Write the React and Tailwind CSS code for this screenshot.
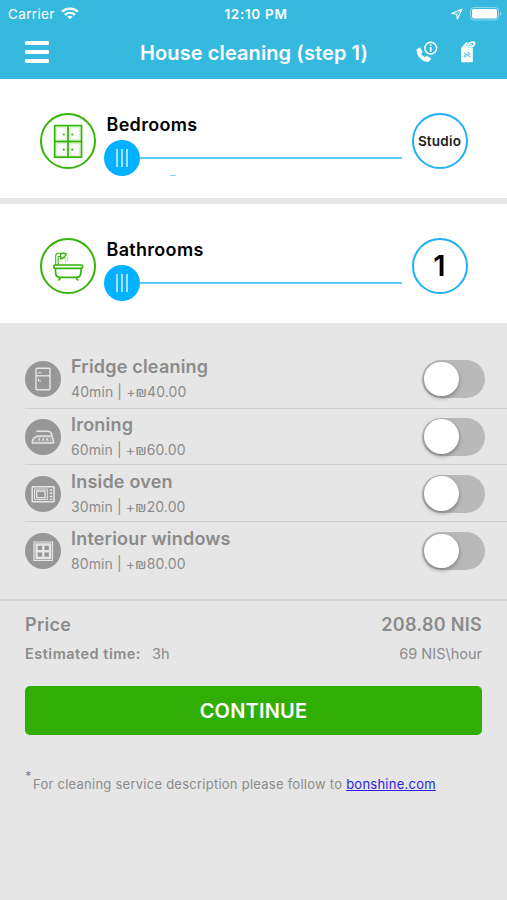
import { useState } from 'react'

const extras = [
  { id: 'fridge', name: 'Fridge cleaning', minutes: 40, price: '40.00', Icon: FridgeIcon, row: 'h-[58px] border-b pb-px' },
  { id: 'ironing', name: 'Ironing', minutes: 60, price: '60.00', Icon: IronIcon, row: 'h-[56px] border-b' },
  { id: 'oven', name: 'Inside oven', minutes: 30, price: '20.00', Icon: OvenIcon, row: 'h-[57px] border-b pt-px' },
  { id: 'windows', name: 'Interiour windows', minutes: 80, price: '80.00', Icon: WindowIcon, row: 'h-[58px]' },
]

function WifiIcon() {
  return (
    <svg width="18" height="13" viewBox="0 0 18 13" fill="none" stroke="white" strokeWidth="2.3">
      <path d="M1 4.700C5.500.5 12.500.5 17 4.700" />
      <path d="M4 7.800c2.900-2.700 7.100-2.700 10 0" />
      <path d="M9 12.300 6.300 9.600c1.500-1.300 3.900-1.300 5.400 0z" fill="white" stroke="none" />
    </svg>
  )
}

function LocationIcon() {
  return (
    <svg width="12" height="12" viewBox="0 0 12 12" fill="none" stroke="white" strokeWidth="1.100" strokeLinejoin="round">
      <path d="M11 1 .8 5.500l4.800.7.700 4.800z" />
      <path d="M11 1 5.600 6.200" strokeWidth=".6" />
    </svg>
  )
}

function BatteryIcon() {
  return (
    <svg width="32" height="14" viewBox="0 0 32 14" fill="none">
      <rect x=".5" y=".5" width="28" height="12.500" rx="3.500" stroke="white" strokeOpacity=".45" />
      <rect x="2" y="2" width="25" height="9.500" rx="2" fill="white" />
      <path d="M30 4.700c1.600.6 1.600 3.500 0 4.100z" fill="white" fillOpacity=".6" />
    </svg>
  )
}

function PhoneInfoIcon() {
  return (
    <svg width="22" height="22" viewBox="0 0 22 22" fill="none">
      <path
        d="M1 8.200 2.900 6.700c.5-.4 1.100-.2 1.400.3l2 3.300c.3.500.2 1-.3 1.400l-.9.900c.9 1.700 2.100 2.900 3.900 3.700l1-1c.4-.4 1-.4 1.500-.1l3 1.900c.5.3.6.9.2 1.400l-1.500 1.800c-.4.500-1 .7-1.700.6C5.900 20.300 1.400 16 .4 9.600c-.1-.6.1-1.100.6-1.400z"
        fill="white"
      />
      <circle cx="14.700" cy="7.100" r="5.900" stroke="white" strokeWidth="1.500" />
      <path d="M14.700 6v4.700M14.700 3.400v1.500" stroke="white" strokeWidth="1.700" />
    </svg>
  )
}

function PriceTagIcon() {
  return (
    <svg width="16" height="22" viewBox="0 0 16 22" fill="none">
      <path d="M1 7.200 5 2.500C5.700 1.700 6.200 1.500 7 1.500h4.300L12.800 7v13c0 .8-.4 1.200-1.200 1.200H2.200C1.400 21.200 1 20.800 1 20z" fill="white" />
      <path d="M7 5.500C8 2.500 11 .9 13.600 1.200c1.500.2 1.300 2.400-.3 3.500-1.800 1.300-3.300 1.300-5 1" stroke="#36b9df" strokeWidth="2.500" />
      <path d="M7 5.500C8 2.500 11 .9 13.600 1.200c1.500.2 1.300 2.400-.3 3.500-1.800 1.300-3.300 1.300-5 1" stroke="white" strokeWidth="1.700" />
      <path d="m3.700 11.800 6.500 4.200" stroke="#36b9df" strokeWidth="1" />
      <circle cx="8.800" cy="12.600" r="1" stroke="#36b9df" strokeWidth=".9" />
      <circle cx="5" cy="15.300" r="1" stroke="#36b9df" strokeWidth=".9" />
    </svg>
  )
}

function DrawersIcon() {
  return (
    <svg width="52" height="52" viewBox="2 2 52 52" fill="none" stroke="#36b509">
      <path d="M14.700 12.700h26.800v31.500H14.700zM28 12.700v31.500M14.700 28.500h26.800" strokeWidth="1.800" />
      <path d="M16.800 14.700h9.300v11.700h-9.300zM30 14.700h9.400v11.700H30zM16.800 30.500h9.300v11.700h-9.300zM30 30.500h9.400v11.700H30z" strokeWidth=".2" />
      <g fill="#36b509" stroke="none">
        <circle cx="23.800" cy="21.500" r="1.100" />
        <circle cx="32.300" cy="21.500" r="1.100" />
        <circle cx="23.800" cy="36.700" r="1.100" />
        <circle cx="32.300" cy="36.700" r="1.100" />
      </g>
    </svg>
  )
}

function BathtubIcon() {
  return (
    <svg width="52" height="52" viewBox="2 2 52 52" fill="none" stroke="#36b509" strokeWidth="1.700" strokeLinecap="round" strokeLinejoin="round">
      <rect x="13.700" y="27" width="29" height="3.300" rx="1.600" />
      <path d="M15.500 30.500v3.200c0 3.500 2 5.700 5.200 5.700h15.200c3.200 0 5.100-2.200 5.100-5.700v-3.200" />
      <path d="M20 39.500c0 1.400-.5 2.200-1.400 2.500M36.500 39.500c0 1.400.5 2.200 1.400 2.500" />
      <path d="M15.700 27V18.200c0-1.900 1-2.900 2.600-2.900h3M18.200 27v-8.500h2.500" strokeWidth="1.100" />
      <path d="M20.600 16v4.700c2.700-.3 4.700-2 5.500-4.900-2-.9-3.900-.9-5.500.2z" strokeWidth="1.500" />
      <path d="M25 20.500v.1M27.500 20v.1M25.500 22.800v.1M27.500 22.300v.1" strokeOpacity=".45" />
    </svg>
  )
}

function FridgeIcon() {
  return (
    <svg width="36" height="36" viewBox="0 0 36 36" fill="none" stroke="#e6e6e6" strokeWidth="1.400">
      <rect x="11" y="7.200" width="14" height="21.500" rx="1" />
      <path d="M11 14.800h14" />
      <path d="M13 11.700h3.500M13.500 17.500v2.500h2.500" strokeWidth="1" />
    </svg>
  )
}

function IronIcon() {
  return (
    <svg width="36" height="36" viewBox="0 0 36 36" fill="none" stroke="#e6e6e6" strokeWidth="1.500" strokeLinejoin="round">
      <path d="M11.500 12.300h11c2.300 0 3.700 1 4.200 3l2.100 8.700H7.200c.3-4.500 3-7 7-7h12.500" />
      <path d="M9.500 22c.4-2.300 2.300-3.300 5-3.300h10.800l.8 3.300z" strokeWidth=".4" />
      <path d="M13.300 20.500h1.800M17.300 20.500h1.800M21.300 20.500h1.800" strokeWidth="1.800" />
    </svg>
  )
}

function OvenIcon() {
  return (
    <svg width="36" height="36" viewBox="0 0 36 36" fill="none" stroke="#e6e6e6" strokeWidth="1.500">
      <rect x="7.200" y="10.800" width="21.800" height="15" rx=".5" />
      <path d="M9.500 13h12.800v10.600H9.500z" strokeWidth="1" />
      <path d="M11.700 15h8.400v6.600h-8.400z" strokeWidth="1.300" />
      <path d="M26 13.200v1.500M26 16.500V18M26 19.800v1.500M26 22.800v1.200" strokeWidth="2.500" />
    </svg>
  )
}

function WindowIcon() {
  return (
    <svg width="36" height="36" viewBox="0 0 36 36" fill="none" stroke="#e6e6e6">
      <path d="M9 9h18.500v18.500H9z" strokeWidth="1.200" />
      <path d="M11.500 11.500h13.500v13.500H11.500zM18.250 11.500v13.500M11.500 18.250h13.500" strokeWidth="2.300" />
    </svg>
  )
}

function SliderPanel({ label, value, valueClass, icon, children }) {
  return (
    <section className="flex bg-white pl-10 pt-[34px]">
      <div className="h-14 w-14 rounded-full border-2 border-[#36b509]">{icon}</div>
      <div className="relative ml-2 w-[298px]">
        <h2 className="pl-[2.500px] pt-px text-[18px] leading-[22px] font-semibold tracking-[0.3px] text-black">{label}</h2>
        <div className="mt-[4px] flex items-center">
          <button className="flex h-[35.500px] w-[35.500px] items-center justify-center gap-[3px] rounded-full bg-[#02b1ff]">
            <span className="h-[18px] w-[2px] bg-[#a3e1ff]" />
            <span className="h-[18px] w-[2px] bg-[#a3e1ff]" />
            <span className="h-[18px] w-[2px] bg-[#a3e1ff]" />
          </button>
          <div className="h-[2px] flex-1 bg-[#5fcbf8]" />
        </div>
        {children}
      </div>
      <div className={`ml-[9.500px] flex h-14 w-14 items-center justify-center rounded-full border-2 border-[#1fb0f5] ${valueClass}`}>
        {value}
      </div>
    </section>
  )
}

function Switch({ on, onChange }) {
  return (
    <button
      role="switch"
      aria-checked={on}
      onClick={onChange}
      className={`flex h-[38px] w-[63px] items-center rounded-full px-[2px] ${on ? 'justify-end bg-[#31ae04]' : 'bg-[#b9b9b9]'}`}
    >
      <span className="h-[34.500px] w-[34.500px] rounded-full bg-white shadow-[0_2px_4px_rgba(0,0,0,0.35)]" />
    </button>
  )
}

export default function App() {
  const [selected, setSelected] = useState([])

  const toggle = (id) => {
    setSelected(selected.includes(id) ? selected.filter(s => s !== id) : [...selected, id])
  }

  return (
    <div className="h-[900px] w-[507px] overflow-hidden bg-[#e6e6e6] font-['Inter','Liberation_Sans',sans-serif] text-[#8b8b8b]">
      {/* Header */}
      <header className="h-[79px] bg-[#36b9df] text-white">
        <div className="grid h-[27px] grid-cols-3 items-center pl-2 pr-[5px] text-[13.500px]">
          <div className="flex items-center gap-[6px]">
            <span className="pt-px tracking-[0.35px]">Carrier</span>
            <WifiIcon />
          </div>
          <div className="pl-[2px] pt-px text-center font-semibold tracking-[0.7px]">12:10 PM</div>
          <div className="flex items-center justify-end gap-[7px]">
            <LocationIcon />
            <BatteryIcon />
          </div>
        </div>
        <div className="flex h-[50px] items-center pl-[25px]">
          <button className="flex w-6 flex-col gap-[5px]">
            <span className="h-1 rounded-[1px] bg-white" />
            <span className="h-1 rounded-[1px] bg-white" />
            <span className="h-1 rounded-[1px] bg-white" />
          </button>
          <h1 className="ml-[90px] w-[230px] whitespace-nowrap pt-px text-center text-[20px] font-semibold tracking-[0.1px]">House cleaning (step 1)</h1>
          <div className="ml-[47px] flex items-center gap-[22px]">
            <PhoneInfoIcon />
            <PriceTagIcon />
          </div>
        </div>
      </header>

      {/* Rooms */}
      <div className="grid grid-rows-[119px_119px] gap-[6px]">
        <SliderPanel label="Bedrooms" value="Studio" valueClass="text-[13.500px] font-semibold tracking-[0.2px] text-[#1d1d1d]" icon={<DrawersIcon />}>
          <span className="absolute left-[66px] top-[62px] h-px w-[6px] rounded-full bg-[#79dcf5]" />
        </SliderPanel>
        <SliderPanel label="Bathrooms" value="1" valueClass="text-[29px] font-semibold text-black" icon={<BathtubIcon />} />
      </div>

      {/* Extras */}
      <div className="pl-[25px] pt-[28px]">
        {extras.map(({ id, name, minutes, price, Icon, row }) => (
          <div key={id} className={`flex items-center border-[#cfcfcf] pr-[22px] ${row}`}>
            <div className="h-9 w-9 rounded-full bg-[#979797]">
              <Icon />
            </div>
            <div className="ml-[10px] flex-1">
              <h3 className="text-[18px] leading-[26px] font-semibold tracking-[0.2px]">{name}</h3>
              <p className="text-[14px] leading-[24px] tracking-[0.1px]">{minutes}min | +₪{price}</p>
            </div>
            <Switch on={selected.includes(id)} onChange={() => toggle(id)} />
          </div>
        ))}
      </div>

      {/* Summary */}
      <div className="mt-[19px] border-t-2 border-[#d4d4d4] px-[25px] pt-[10px]">
        <div className="flex h-[26px] items-center justify-between text-[18px] font-semibold tracking-[0.3px]">
          <span>Price</span>
          <span>208.80 NIS</span>
        </div>
        <div className="mt-[7px] flex h-5 items-center justify-between text-[14.500px]">
          <div className="flex items-center">
            <span className="font-semibold tracking-[0.5px]">Estimated time:</span>
            <span className="ml-[11px]">3h</span>
          </div>
          <span>69 NIS\hour</span>
        </div>
        <button className="mt-[22px] h-[49px] w-full rounded-[5px] bg-[#31ae04] pt-px text-[20px] font-semibold tracking-[0.2px] text-white">
          CONTINUE
        </button>
        <p className="mt-[37px] flex whitespace-pre text-[13px] leading-6 tracking-[0.250px]">
          <span className="w-[8px] text-[12px] leading-[8px] font-semibold">*</span>
          For cleaning service description please follow to{' '}
          <a href="#" className="text-[#2c22e0] underline">bonshine.com</a>
        </p>
      </div>
    </div>
  )
}
